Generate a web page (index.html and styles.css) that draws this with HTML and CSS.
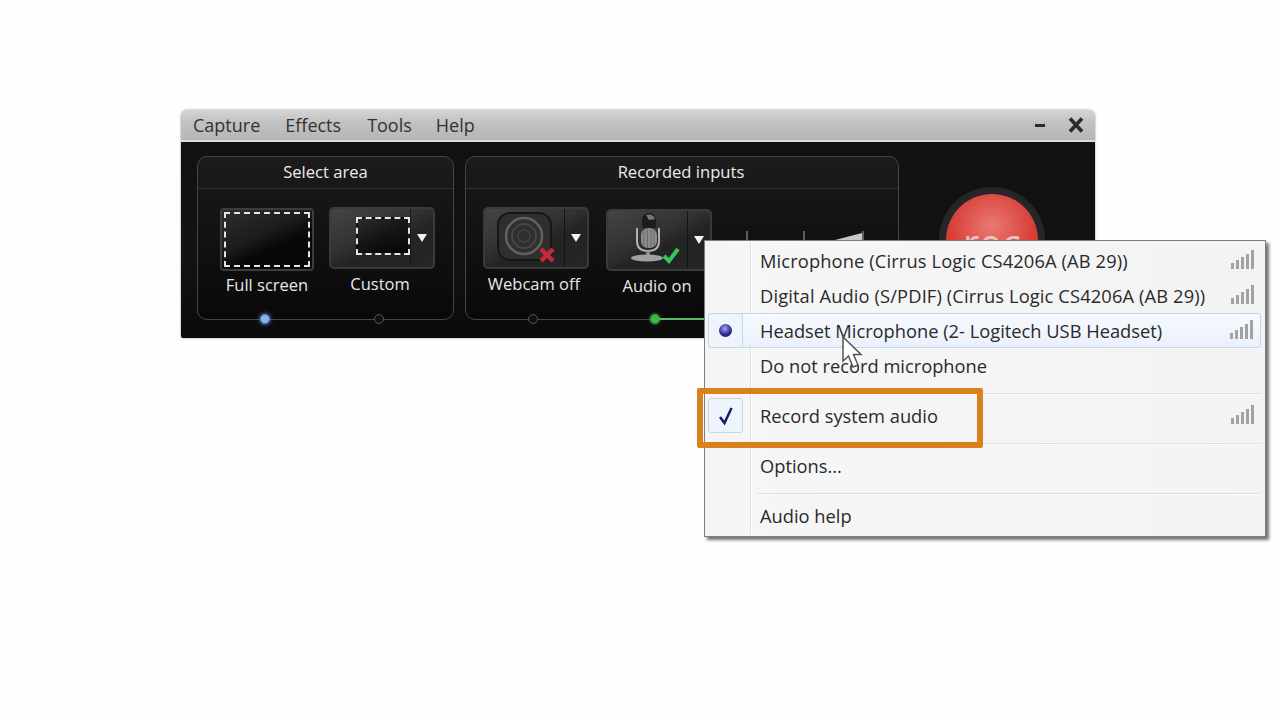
FILE: index.html
```html
<!DOCTYPE html>
<html lang="en">
<head>
<meta charset="utf-8">
<title>Recorder</title>
<link rel="stylesheet" href="styles.css">
</head>
<body>
<div class="stage">
  <div class="window">
    <div class="titlebar">
      <nav class="menubar">
        <span class="menu-capture">Capture</span>
        <span class="menu-effects">Effects</span>
        <span class="menu-tools">Tools</span>
        <span>Help</span>
      </nav>
      <div class="winctl">
        <span class="minimize"></span>
        <svg class="close" width="16" height="16" viewBox="0 0 16 16"><path d="M2 1.500 L14 14.500 M14 1.500 L2 14.500" stroke="#2c2c2c" stroke-width="3.600" fill="none"/></svg>
      </div>
    </div>
    <div class="body">
      <section class="panel panel-area">
        <h2 class="panel-title">Select area</h2>
        <div class="tiles">
          <div class="tile tile-full">
            <div class="fullbtn"><span class="dash dash-full"></span></div>
            <span class="tile-label">Full screen</span>
            <span class="dot dot-blue"></span>
          </div>
          <div class="tile tile-drop tile-raised">
            <div class="dropbtn">
              <div class="drop-main drop-main-end"><span class="dash dash-custom"></span></div>
              <div class="drop-arrow"><span class="tri"></span></div>
            </div>
            <span class="tile-label">Custom</span>
            <span class="dot"></span>
          </div>
        </div>
      </section>
      <section class="panel panel-inputs">
        <h2 class="panel-title">Recorded inputs</h2>
        <div class="tiles">
          <div class="tile tile-drop tile-raised">
            <div class="dropbtn">
              <div class="drop-main">
                <svg width="78" height="60" viewBox="0 0 78 60">
                  <rect x="12" y="5" width="53" height="47" rx="12" fill="#2f2f2f" stroke="#161616" stroke-width="2"/>
                  <circle cx="38" cy="28" r="18" fill="none" stroke="#606060" stroke-width="2.500"/>
                  <circle cx="38" cy="28" r="12" fill="none" stroke="#474747" stroke-width="2"/>
                  <circle cx="38" cy="28" r="6" fill="none" stroke="#3e3e3e" stroke-width="2"/>
                  <path d="M55 41 L67 53 M67 41 L55 53" stroke="#c8283a" stroke-width="4.500" fill="none"/>
                </svg>
              </div>
              <div class="drop-arrow"><span class="tri"></span></div>
            </div>
            <span class="tile-label">Webcam off</span>
            <span class="dot"></span>
          </div>
          <div class="tile tile-drop tile-audio">
            <div class="dropbtn">
              <div class="drop-main">
                <svg width="78" height="60" viewBox="0 0 78 60">
                  <rect x="33" y="3" width="14" height="18" rx="7" fill="#1c1c1c"/>
                  <path d="M37 5 Q44 3 46 9 L40 10 Z" fill="#777"/>
                  <rect x="32" y="18" width="16" height="20" rx="7" fill="#8c8c8c"/>
                  <path d="M35 19 V37 M38.500 18 V38 M42 18 V38 M45 19 V37" stroke="#6a6a6a" stroke-width="1"/>
                  <path d="M28 18 V31 Q28 41 39 41 Q50 41 50 31 V18" fill="none" stroke="#b0b0b0" stroke-width="2"/>
                  <rect x="37" y="41" width="4" height="5" fill="#8a8a8a"/>
                  <ellipse cx="38" cy="48" rx="16" ry="3.500" fill="#a0a0a0"/>
                  <path d="M55 46 L60 51 L69 39" stroke="#35c75a" stroke-width="4" fill="none"/>
                </svg>
              </div>
              <div class="drop-arrow"><span class="tri"></span></div>
            </div>
            <span class="tile-label">Audio on</span>
            <span class="dot dot-green"></span>
          </div>
          <svg class="meter" width="125" height="14" viewBox="0 0 125 14">
            <path d="M90 12 L117 5 V12 Z" fill="#c8c8c8"/>
            <path d="M2 3 V14 M59 3 V14 M118 3 V14" stroke="#777" stroke-width="1.500"/>
          </svg>
        </div>
      </section>
      <div class="rec"><span class="rec-face"><span class="rec-text">rec</span></span></div>
    </div>
  </div>

  <div class="popup">
    <div class="row"><span class="gutter"></span><span class="row-text row-text-wide">Microphone (Cirrus Logic CS4206A (AB 29))</span><span class="signal"><i></i><i></i><i></i><i></i><i></i></span></div>
    <div class="row"><span class="gutter"></span><span class="row-text row-text-wide">Digital Audio (S/PDIF) (Cirrus Logic CS4206A (AB 29))</span><span class="signal"><i></i><i></i><i></i><i></i><i></i></span></div>
    <div class="row row-active"><span class="gutter"><span class="tickbox"><span class="radio"></span></span></span><span class="row-text">Headset Microphone (2- Logitech USB Headset)</span><span class="signal"><i></i><i></i><i></i><i></i><i></i></span></div>
    <div class="row"><span class="gutter"></span><span class="row-text">Do not record microphone</span></div>
    <div class="sep"></div>
    <div class="row"><span class="gutter"><span class="tickbox"><svg width="18" height="20" viewBox="0 0 18 20"><path d="M3 11 L7.500 17 L14.500 2" stroke="#1d1a6e" stroke-width="2.500" fill="none"/></svg></span></span><span class="row-text">Record system audio</span><span class="signal"><i></i><i></i><i></i><i></i><i></i></span></div>
    <div class="sep"></div>
    <div class="row"><span class="gutter"></span><span class="row-text">Options...</span></div>
    <div class="sep"></div>
    <div class="row"><span class="gutter"></span><span class="row-text">Audio help</span></div>
  </div>

  <div class="highlight"></div>
  <svg class="cursor" width="24" height="34" viewBox="0 0 24 34"><path d="M2 1 V25 L7.500 20 L12 31 L17 29 L12.500 18.500 L20 18.500 Z" fill="#fff" stroke="#555" stroke-width="1.500"/></svg>
</div>
</body>
</html>
```
FILE: styles.css
```css
* { box-sizing: border-box; }
html, body { margin: 0; padding: 0; height: 100%; overflow: hidden; }
body { background: #fefefe; font-family: "Open Sans", "Noto Sans", sans-serif; }

.stage { position: relative; width: 1280px; height: 720px; padding: 110px 0 0 181px; }

.window { width: 914px; height: 228px; border-radius: 6px 6px 2px 2px; overflow: hidden; box-shadow: 0 0 2px rgba(0,0,0,.5); display: flex; flex-direction: column; }

.titlebar { height: 32px; flex: none; display: flex; align-items: center; justify-content: space-between; padding: 0 11px 0 12px; background: linear-gradient(#d4d4d4, #c2c2c2 40%, #b6b6b6); border-bottom: 2px solid #dcdcdc; }
.menubar { display: flex; font-size: 18px; color: #333; }
.menu-capture { margin-right: 25px; }
.menu-effects { margin-right: 26px; }
.menu-tools { margin-right: 24px; }
.winctl { display: flex; align-items: center; gap: 23px; }
.minimize { width: 10px; height: 3px; background: #2c2c2c; }
.close { display: block; }

.body { flex: 1; display: flex; align-items: flex-start; padding: 14px 0 0 16px; gap: 11px; background: linear-gradient(#111, #131313 60%, #0a0a0a); }

.panel { position: relative; height: 164px; border: 1px solid #454545; border-radius: 10px; background: linear-gradient(#1c1c1c, #161616 25%, #090909); display: flex; flex-direction: column; }
.panel-area { width: 257px; }
.panel-inputs { width: 434px; }
.panel-title { margin: 0; height: 32px; flex: none; border-bottom: 1px solid #333; font-size: 16.600px; font-weight: 400; line-height: 29px; text-align: center; color: #ececec; }
.panel-inputs .panel-title { padding-right: 2px; }

.tiles { flex: 1; display: flex; gap: 15px; padding-left: 22px; }
.panel-inputs .tiles { gap: 17px; padding-left: 17px; }

.tile { display: flex; flex-direction: column; align-items: center; padding-top: 20px; }
.tile-raised { padding-top: 18px; }
.tile-full { padding-top: 19px; }
.tile-label { margin-top: 4px; font-size: 16.500px; line-height: 22px; color: #e8e8e8; }
.tile-full .tile-label { margin-top: 3px; }
.tile-drop .tile-label { transform: translateX(-2px); }
.tile-drop .dot { transform: translateX(-3px); }
.tile-full .dot { transform: translateX(-2px); }
.tile-audio .dot { transform: translateX(-4px); }

.dot { width: 10px; height: 10px; flex: none; margin-top: auto; margin-bottom: -5px; border-radius: 50%; background: #111; border: 1px solid #555; position: relative; }
.dot-blue { background: #8bb2f0; border-color: #5a7ab5; box-shadow: 0 0 4px #6d94dd; }
.dot-green { background: #3fb84a; border-color: #2f8a38; box-shadow: 0 0 3px #3fb84a; }
.dot-green::after { content: ""; position: absolute; left: 8px; top: 3px; width: 60px; height: 2px; background: #5cb860; }

.fullbtn { width: 94px; height: 63px; padding: 2px; border: 2px solid #3c3c3c; border-radius: 4px; background: linear-gradient(155deg, #2e2e2e, #1c1c1c 42%, #070707 62%); }
.dash { display: block; border: 2px dashed #e4e4e4; }
.dash-full { width: 100%; height: 100%; }
.dash-custom { width: 54px; height: 38px; background: linear-gradient(155deg, #2b2b2b, #141414 50%, #050505); }

.dropbtn { width: 106px; height: 62px; display: flex; border: 2px solid #3a3a3a; border-radius: 5px; overflow: hidden; background: linear-gradient(155deg, #444, #333 40%, #232323 60%, #262626); }
.drop-main { flex: 1; min-width: 0; display: flex; align-items: center; justify-content: center; border-right: 1px solid #141414; }
.drop-main-end { justify-content: flex-end; padding: 0 0 4px; }
.drop-arrow { width: 22px; flex: none; display: flex; align-items: center; justify-content: center; }
.tri { width: 0; height: 0; border-left: 5px solid transparent; border-right: 5px solid transparent; border-top: 8px solid #f2f2f2; }

.meter { margin: 39px 0 0 16px; flex: none; }

.rec { flex: none; margin: 31px 0 0 29px; width: 106px; height: 106px; border-radius: 50%; background: #262626; padding: 7px; }
.rec-face { display: flex; justify-content: center; width: 92px; height: 92px; border-radius: 50%; background: radial-gradient(circle at 50% 35%, #e87a72, #d83f38 55%, #b82420); }
.rec-text { font-size: 40px; line-height: 98px; height: 46px; overflow: hidden; color: #e8c4c0; }

.popup { position: absolute; left: 704px; top: 240px; width: 562px; height: 297px; padding: 2px 4px 2px 3px; border: 1px solid #7e7e7e; background: linear-gradient(90deg, #f4f4f4, #f6f6f6 8%, #f3f3f3); box-shadow: 3px 3px 3px rgba(0,0,0,.55); }
.popup::before { content: ""; position: absolute; left: 45px; top: 2px; bottom: 2px; width: 2px; background: linear-gradient(90deg, #dedede 50%, #fff 50%); }
.row { position: relative; height: 35px; display: flex; align-items: center; font-size: 18.300px; color: #2a2a2a; }
.row-active { border: 1px solid #c6d5e8; border-radius: 3px; background: linear-gradient(#f7fafe, #e9f1fb); }
.gutter { width: 52px; flex: none; display: flex; align-items: center; }
.row-active .gutter { width: 52px; margin-left: -1px; }
.tickbox { width: 35px; height: 35px; flex: none; display: flex; align-items: center; justify-content: center; border: 1px solid #c6d5e8; border-radius: 3px; background: #eef4fc; }
.radio { width: 13px; height: 13px; border-radius: 50%; background: radial-gradient(circle at 45% 35%, #a8a4ea, #2f2a8c 55%, #15124e); }
.row-text { white-space: nowrap; }
.row-text-wide { letter-spacing: .13px; }
.signal { margin-left: auto; margin-right: 7px; margin-bottom: 3px; display: flex; align-items: flex-end; gap: 2px; height: 20px; }
.signal i { width: 3px; background: #a2a2a2; }
.signal i:nth-child(1) { height: 6px; }
.signal i:nth-child(2) { height: 9px; }
.signal i:nth-child(3) { height: 12px; }
.signal i:nth-child(4) { height: 15px; }
.signal i:nth-child(5) { height: 19px; }
.sep { height: 15px; margin-left: 49px; display: flex; align-items: flex-end; padding-bottom: 3px; }
.sep::before { content: ""; display: block; width: 100%; height: 2px; background: linear-gradient(#dfdfdf 50%, #fbfbfb 50%); }

.highlight { position: absolute; left: 697px; top: 388px; width: 286px; height: 60px; border: 6px solid #d9821c; border-radius: 2px; }
.cursor { position: absolute; left: 841px; top: 336px; }
```
